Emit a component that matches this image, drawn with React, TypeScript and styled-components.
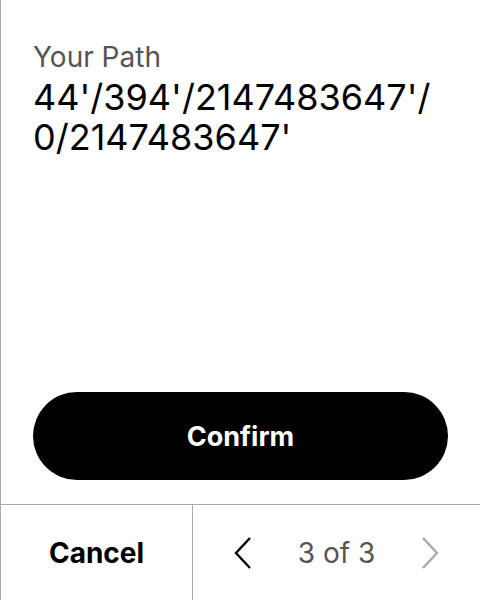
import styled, { createGlobalStyle } from "styled-components";

const GlobalStyle = createGlobalStyle`
  html, body {
    margin: 0;
    padding: 0;
    background: #fff;
  }
  body {
    font-family: Inter, "Noto Sans", sans-serif;
    color: #000;
  }
`;

const Screen = styled.div`
  width: 480px;
  height: 600px;
  box-sizing: border-box;
  border-left: 1px solid #aaa;
  display: flex;
  flex-direction: column;
`;

const Content = styled.main`
  flex: 1;
  display: flex;
  flex-direction: column;
  padding: 39px 32px 24px 32px;
`;

const Label = styled.div`
  font-size: 28px;
  line-height: 36px;
  color: #555;
`;

const PathText = styled.div`
  margin-top: 2px;
  font-size: 36px;
  line-height: 40px;
`;

const ConfirmButton = styled.button`
  margin-top: auto;
  height: 88px;
  width: 100%;
  border: none;
  border-radius: 44px;
  background: #000;
  color: #fff;
  font-family: inherit;
  font-size: 27px;
  font-weight: 700;
  cursor: pointer;
`;

const Footer = styled.footer`
  box-sizing: border-box;
  height: 96px;
  border-top: 1px solid #aaa;
  display: grid;
  grid-template-columns: 192px 1fr;
`;

const CancelButton = styled.button`
  border: none;
  border-right: 1px solid #aaa;
  background: none;
  font-family: inherit;
  font-size: 28px;
  font-weight: 700;
  color: #000;
`;

const Pager = styled.div`
  display: flex;
  align-items: center;
  justify-content: space-between;
  padding: 0 40px 0 40px;
`;

const PageCount = styled.span`
  font-size: 28px;
  color: #555;
`;

const Chevron = ({ dir, color }: { dir: "left" | "right"; color: string }) => (
  <svg width="20" height="34" viewBox="0 0 20 34" fill="none">
    <path
      d={dir === "left" ? "M17 2 L3 17 L17 32" : "M3 2 L17 17 L3 32"}
      stroke={color}
      strokeWidth="2.4"
    />
  </svg>
);

const App = () => {
  const segments = ["44'", "394'", "2147483647'", "0", "2147483647'"];
  return (
    <>
      <GlobalStyle />
      <Screen>
        <Content>
          <Label>Your Path</Label>
          <PathText>
            {segments.map((seg, i) => (
              <span key={i}>
                {seg}
                {i < segments.length - 1 && (
                  <>
                    /<wbr />
                  </>
                )}
              </span>
            ))}
          </PathText>
          <ConfirmButton>Confirm</ConfirmButton>
        </Content>
        <Footer>
          <CancelButton>Cancel</CancelButton>
          <Pager>
            <Chevron dir="left" color="#000" />
            <PageCount>3 of 3</PageCount>
            <Chevron dir="right" color="#aaa" />
          </Pager>
        </Footer>
      </Screen>
    </>
  );
};

export default App;
